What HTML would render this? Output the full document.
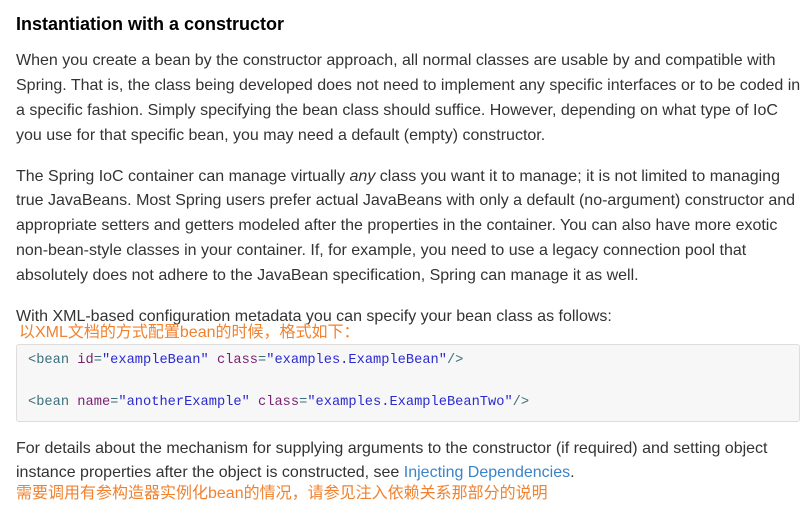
<!DOCTYPE html>
<html><head><meta charset="utf-8"><style>
body{margin:0;width:811px;height:520px;background:#fff;font-family:"Liberation Sans",Arial,sans-serif;color:#333;position:relative;overflow:hidden}
.l{position:absolute;left:16px;white-space:nowrap;font-size:16px;line-height:20px}
h3{position:absolute;left:16px;top:13px;margin:0;font-size:18px;font-weight:bold;color:#000;line-height:22px}
.cn{color:#f0822f;font-family:"Liberation Sans","Noto Sans CJK SC",sans-serif;font-size:16px}
.code{position:absolute;left:16px;top:344px;width:782px;height:76px;background:#f7f7f7;border:1px solid #ddd;border-radius:3px}
.c{position:absolute;left:11px;font-family:"Liberation Mono",monospace;font-size:13.7px;white-space:nowrap;color:#3a6f7a}
.a{color:#7a1f6f}.s{color:#2a2ad0}
a{color:#3b83c8;text-decoration:none}
</style></head><body>
<h3>Instantiation with a constructor</h3>
<div class="l" style="top:51px">When you create a bean by the constructor approach, all normal classes are usable by and compatible with</div>
<div class="l" style="top:76px">Spring. That is, the class being developed does not need to implement any specific interfaces or to be coded in</div>
<div class="l" style="top:101px">a specific fashion. Simply specifying the bean class should suffice. However, depending on what type of IoC</div>
<div class="l" style="top:126px">you use for that specific bean, you may need a default (empty) constructor.</div>
<div class="l" style="top:167px">The Spring IoC container can manage virtually <i>any</i> class you want it to manage; it is not limited to managing</div>
<div class="l" style="top:191px">true JavaBeans. Most Spring users prefer actual JavaBeans with only a default (no-argument) constructor and</div>
<div class="l" style="top:216px">appropriate setters and getters modeled after the properties in the container. You can also have more exotic</div>
<div class="l" style="top:241px">non-bean-style classes in your container. If, for example, you need to use a legacy connection pool that</div>
<div class="l" style="top:266px">absolutely does not adhere to the JavaBean specification, Spring can manage it as well.</div>
<div class="l" style="top:307px">With XML-based configuration metadata you can specify your bean class as follows:</div>
<div class="l cn" style="top:323px;left:19px">以XML文档的方式配置bean的时候，格式如下：</div>
<div class="code">
<div class="c" style="top:8px">&lt;bean <span class="a">id</span>=<span class="s">"exampleBean"</span> <span class="a">class</span>=<span class="s">"examples.ExampleBean"</span>/&gt;</div>
<div class="c" style="top:50px">&lt;bean <span class="a">name</span>=<span class="s">"anotherExample"</span> <span class="a">class</span>=<span class="s">"examples.ExampleBeanTwo"</span>/&gt;</div>
</div>
<div class="l" style="top:439px">For details about the mechanism for supplying arguments to the constructor (if required) and setting object</div>
<div class="l" style="top:463px">instance properties after the object is constructed, see <a>Injecting Dependencies</a>.</div>
<div class="l cn" style="top:484px">需要调用有参构造器实例化bean的情况，请参见注入依赖关系那部分的说明</div>
</body></html>
